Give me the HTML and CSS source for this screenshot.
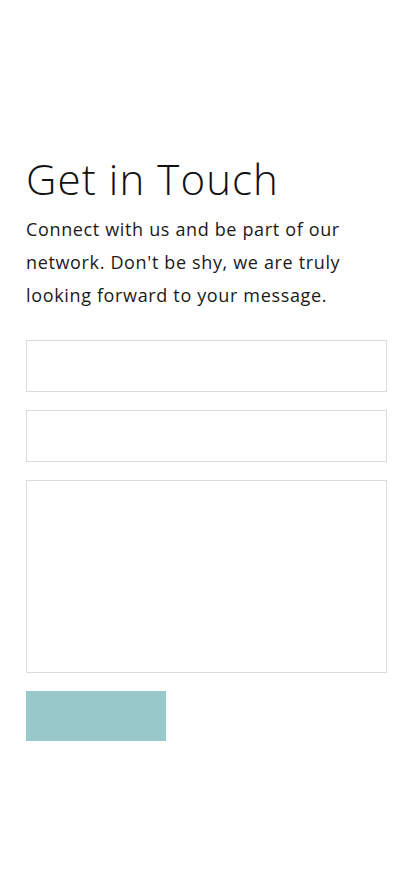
FILE: index.html
```html
<!DOCTYPE html>
<html lang="en">
<head>
<meta charset="utf-8">
<title>Get in Touch</title>
<link rel="stylesheet" href="styles.css">
</head>
<body>
<main class="contact">
  <h1 class="contact__title">Get in Touch</h1>
  <p class="contact__text">Connect with us and be part of our network. Don't be shy, we are truly looking forward to your message.</p>
  <form class="contact__form">
    <input class="contact__field" type="text" aria-label="Name">
    <input class="contact__field" type="email" aria-label="Email">
    <textarea class="contact__field contact__field--area" aria-label="Message"></textarea>
    <button class="contact__submit" type="submit"></button>
  </form>
</main>
</body>
</html>
```
FILE: styles.css
```css
html, body {
  margin: 0;
  padding: 0;
  background: #fff;
}
.contact {
  padding: 153px 27px 0 26px;
  font-family: "Open Sans", "DejaVu Sans", sans-serif;
  color: #111;
}
.contact__title {
  margin: 0;
  font-size: 42px;
  font-weight: 300;
  line-height: 52px;
  letter-spacing: 1.1px;
}
.contact__text {
  max-width: 345px;
  margin: 8px 0 0;
  font-size: 18px;
  line-height: 33px;
  letter-spacing: 0.65px;
  color: #1a1a1a;
}
.contact__form {
  display: flex;
  flex-direction: column;
  align-items: flex-start;
  gap: 18px;
  margin-top: 28px;
}
.contact__field {
  box-sizing: border-box;
  width: 100%;
  height: 52px;
  margin: 0;
  border: 1px solid #dcdcdc;
  background: #fff;
  font: inherit;
  resize: none;
}
.contact__field--area {
  height: 193px;
}
.contact__submit {
  width: 140px;
  height: 50px;
  border: 0;
  background: #98c8c9;
}
```
